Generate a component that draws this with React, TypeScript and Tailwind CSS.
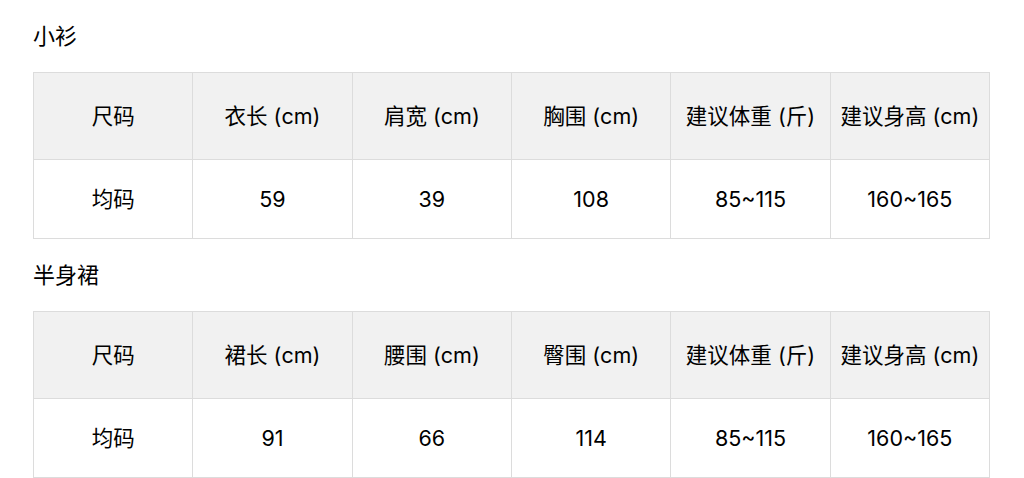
const FONT = "font-['Inter','Noto_Sans_CJK_SC',sans-serif]";

type Section = {
  title: string;
  headers: string[];
  row: string[];
};

const SECTIONS: Section[] = [
  {
    title: "小衫",
    headers: ["尺码", "衣长 (cm)", "肩宽 (cm)", "胸围 (cm)", "建议体重 (斤)", "建议身高 (cm)"],
    row: ["均码", "59", "39", "108", "85~115", "160~165"],
  },
  {
    title: "半身裙",
    headers: ["尺码", "裙长 (cm)", "腰围 (cm)", "臀围 (cm)", "建议体重 (斤)", "建议身高 (cm)"],
    row: ["均码", "91", "66", "114", "85~115", "160~165"],
  },
];

function SizeTable({ section }: { section: Section }) {
  return (
    <div>
      <div className="h-[72px] flex items-center">
        <h2 className="text-[22px] leading-[28px] font-normal text-black">{section.title}</h2>
      </div>
      <table className="w-[957px] table-fixed border-collapse">
        <thead>
          <tr className="h-[87px] bg-[#f1f1f1]">
            {section.headers.map((h) => (
              <th key={h} className="border border-[#dcdcdc] text-center font-normal text-[21.5px] text-black px-0 whitespace-nowrap">
                {h}
              </th>
            ))}
          </tr>
        </thead>
        <tbody>
          <tr className="h-[79px] bg-white">
            {section.row.map((v, i) => (
              <td key={i} className="border border-[#dcdcdc] text-center font-normal text-[21.5px] text-black">
                {v}
              </td>
            ))}
          </tr>
        </tbody>
      </table>
    </div>
  );
}

export default function App() {
  return (
    <div className={`${FONT} bg-white w-[1024px] h-[478px] overflow-hidden pl-[33px]`}>
      {SECTIONS.map((s) => (
        <SizeTable key={s.title} section={s} />
      ))}
    </div>
  );
}
